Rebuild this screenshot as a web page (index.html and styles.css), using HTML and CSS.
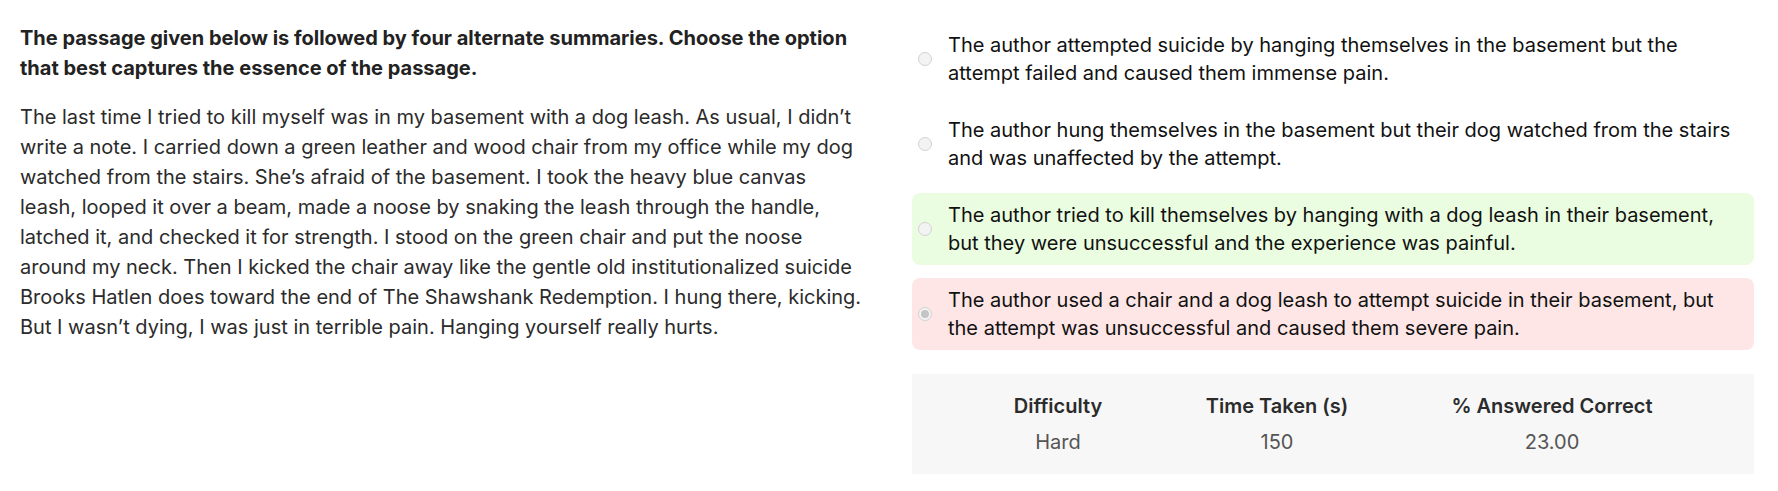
FILE: index.html
```html
<!DOCTYPE html>
<html lang="en">
<head>
<meta charset="utf-8">
<title>Summary Question</title>
<link rel="stylesheet" href="styles.css">
</head>
<body>
<main class="page">
  <section class="left">
    <p class="question">The passage given below is followed by four alternate summaries. Choose the option that best captures the essence of the passage.</p>
    <p class="passage">The last time I tried to kill myself was in my basement with a dog leash. As usual, I didn’t write a note. I carried down a green leather and wood chair from my office while my dog watched from the stairs. She’s afraid of the basement. I took the heavy blue canvas leash, looped it over a beam, made a noose by snaking the leash through the handle, latched it, and checked it for strength. I stood on the green chair and put the noose around my neck. Then I kicked the chair away like the gentle old institutionalized suicide Brooks Hatlen does toward the end of The Shawshank Redemption. I hung there, kicking. But I wasn’t dying, I was just in terrible pain. Hanging yourself really hurts.</p>
  </section>
  <section class="right">
    <div class="options">
      <div class="option">
        <span class="radio"></span>
        <span class="opt-text">The author attempted suicide by hanging themselves in the basement but the attempt failed and caused them immense pain.</span>
      </div>
      <div class="option">
        <span class="radio"></span>
        <span class="opt-text">The author hung themselves in the basement but their dog watched from the stairs and was unaffected by the attempt.</span>
      </div>
      <div class="option correct">
        <span class="radio"></span>
        <span class="opt-text">The author tried to kill themselves by hanging with a dog leash in their basement, but they were unsuccessful and the experience was painful.</span>
      </div>
      <div class="option wrong">
        <span class="radio checked"></span>
        <span class="opt-text">The author used a chair and a dog leash to attempt suicide in their basement, but the attempt was unsuccessful and caused them severe pain.</span>
      </div>
    </div>
    <div class="stats">
      <div class="stat">
        <div class="stat-head">Difficulty</div>
        <div class="stat-val">Hard</div>
      </div>
      <div class="stat">
        <div class="stat-head">Time Taken (s)</div>
        <div class="stat-val">150</div>
      </div>
      <div class="stat">
        <div class="stat-head">% Answered Correct</div>
        <div class="stat-val">23.00</div>
      </div>
    </div>
  </section>
</main>
</body>
</html>
```

FILE: styles.css
```css
* { box-sizing: border-box; }
html, body { margin: 0; padding: 0; background: #fff; }
body {
  font-family: Inter, "Noto Sans", "Liberation Sans", sans-serif;
  font-size: 20px;
  color: #2b2b2b;
}
.page {
  display: grid;
  grid-template-columns: 846px 842px;
  column-gap: 46px;
  padding: 23px 24px 0 20px;
}
.question {
  margin: 0 0 19px;
  font-weight: 700;
  line-height: 30px;
  color: #222;
}
.passage {
  margin: 0;
  line-height: 30px;
  color: #2b2b2b;
}
.options {
  display: flex;
  flex-direction: column;
  gap: 13px;
}
.option {
  display: flex;
  align-items: center;
  height: 72px;
  padding: 8px 16px 8px 6px;
  border-radius: 8px;
  color: #111;
  line-height: 28.5px;
}
.option.correct { background: #eafde0; }
.option.wrong { background: #fee6e6; }
.radio {
  flex: 0 0 auto;
  width: 14px;
  height: 14px;
  border-radius: 50%;
  border: 1px solid #d2d2d2;
  background: #f3f3f3;
  margin-right: 16px;
  position: relative;
}
.radio.checked::after {
  content: "";
  position: absolute;
  left: 2px;
  top: 2px;
  width: 8px;
  height: 8px;
  border-radius: 50%;
  background: #c4c4c4;
}
.opt-text { display: block; }
.stats {
  margin-top: 24px;
  background: #f7f7f7;
  height: 100px;
  padding: 0 50px;
  display: grid;
  grid-template-columns: 192px 246px 304px;
  align-content: center;
  font-size: 20px;
}
.stat {
  text-align: center;
  white-space: nowrap;
}
.stat-head {
  font-weight: 600;
  color: #2b2b2b;
  line-height: 36px;
}
.stat-val {
  color: #555;
  line-height: 36px;
}
```
